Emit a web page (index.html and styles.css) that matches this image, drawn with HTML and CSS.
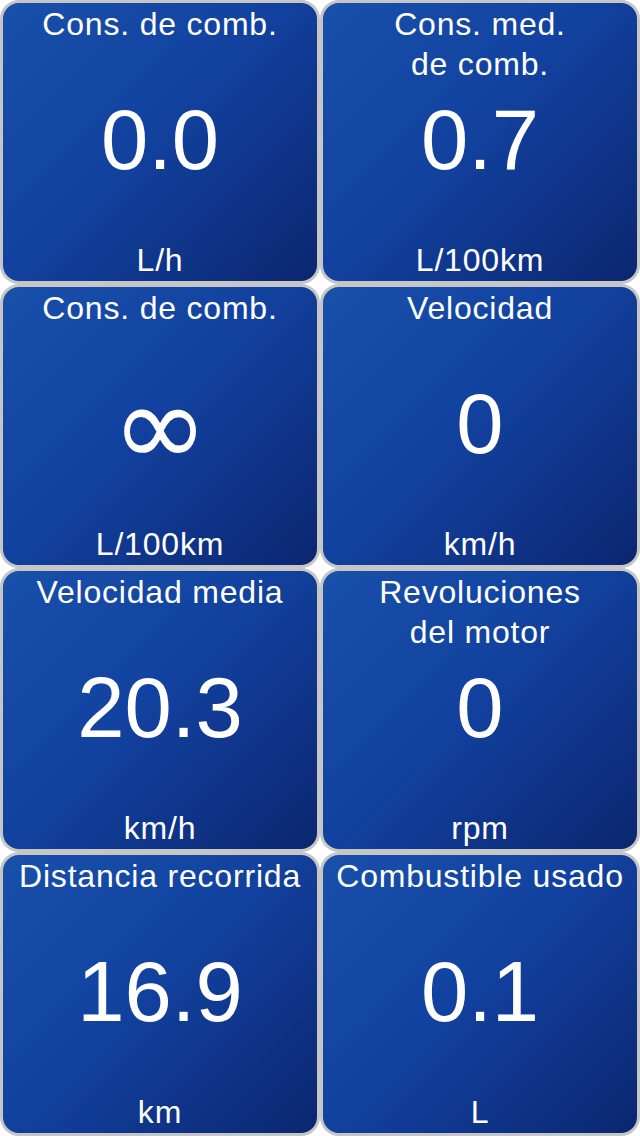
FILE: index.html
```html
<!DOCTYPE html>
<html lang="es">
<head>
<meta charset="utf-8">
<title>Panel</title>
<link rel="stylesheet" href="styles.css">
</head>
<body>
<main class="grid">
  <section class="tile">
    <div class="title">Cons. de comb.</div>
    <div class="value">0.0</div>
    <div class="unit">L/h</div>
  </section>
  <section class="tile">
    <div class="title">Cons. med.<br>de comb.</div>
    <div class="value">0.7</div>
    <div class="unit">L/100km</div>
  </section>
  <section class="tile">
    <div class="title">Cons. de comb.</div>
    <div class="value value-inf">∞</div>
    <div class="unit">L/100km</div>
  </section>
  <section class="tile">
    <div class="title">Velocidad</div>
    <div class="value">0</div>
    <div class="unit">km/h</div>
  </section>
  <section class="tile">
    <div class="title">Velocidad media</div>
    <div class="value">20.3</div>
    <div class="unit">km/h</div>
  </section>
  <section class="tile">
    <div class="title">Revoluciones<br>del motor</div>
    <div class="value">0</div>
    <div class="unit">rpm</div>
  </section>
  <section class="tile">
    <div class="title">Distancia recorrida</div>
    <div class="value">16.9</div>
    <div class="unit">km</div>
  </section>
  <section class="tile">
    <div class="title">Combustible usado</div>
    <div class="value">0.1</div>
    <div class="unit">L</div>
  </section>
</main>
</body>
</html>
```
FILE: styles.css
```css
html, body {
  margin: 0;
  padding: 0;
  background: #ffffff;
}

body {
  font-family: "Liberation Sans", Arial, sans-serif;
  color: #ffffff;
}

.grid {
  display: grid;
  grid-template-columns: 320px 320px;
  grid-template-rows: repeat(4, 284px);
  width: 640px;
  height: 1136px;
}

.tile {
  box-sizing: border-box;
  border: 3px solid #c6c6c6;
  border-radius: 19px;
  background: linear-gradient(135deg, #1850aa 0%, #1242a0 45%, #0b2670 100%);
  display: grid;
  grid-template-columns: 1fr;
  grid-template-rows: 1fr;
  padding: 1px 0;
  text-align: center;
  overflow: hidden;
}

.title, .value, .unit {
  grid-area: 1 / 1;
}

.title {
  align-self: start;
  font-size: 32px;
  line-height: 40px;
  letter-spacing: 0.8px;
}

.value {
  align-self: center;
  font-size: 85px;
  line-height: 100px;
  margin-bottom: 4px;
}

.value-inf {
  font-family: "DejaVu Sans", sans-serif;
  font-size: 116px;
  line-height: 120px;
  margin-bottom: 0;
}

.unit {
  align-self: end;
  font-size: 32px;
  line-height: 40px;
  letter-spacing: 0.8px;
}
```
